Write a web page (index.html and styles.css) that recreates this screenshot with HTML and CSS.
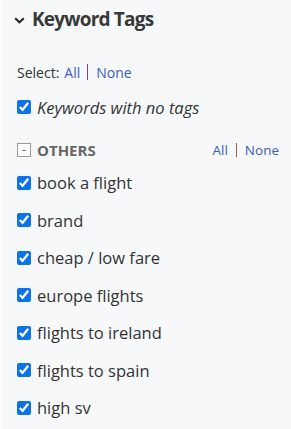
FILE: index.html
```html
<!DOCTYPE html>
<html>
<head>
<meta charset="utf-8">
<link rel="stylesheet" href="styles.css">
</head>
<body>
<div class="panel">
  <div class="header">
    <svg class="chev" width="11" height="7" viewBox="0 0 11 7"><path d="M1.2 1.2 L5.5 5.3 L9.8 1.2" fill="none" stroke="#222" stroke-width="2"/></svg>
    <span class="title">Keyword Tags</span>
  </div>
  <div class="select"><span class="lbl">Select:</span><a class="lnk">All</a><span class="sep"></span><a class="lnk">None</a></div>
  <label class="nokw"><input type="checkbox" checked><span>Keywords with no tags</span></label>
  <div class="group">
    <div class="ghead">
      <span class="minus">-</span>
      <span class="gname">OTHERS</span>
      <span class="gsel"><a class="lnk">All</a><span class="sep red"></span><a class="lnk">None</a></span>
    </div>
    <ul class="items">
      <li><label><input type="checkbox" checked><span>book a flight</span></label></li>
      <li><label><input type="checkbox" checked><span>brand</span></label></li>
      <li><label><input type="checkbox" checked><span>cheap / low fare</span></label></li>
      <li><label><input type="checkbox" checked><span>europe flights</span></label></li>
      <li><label><input type="checkbox" checked><span>flights to ireland</span></label></li>
      <li><label><input type="checkbox" checked><span>flights to spain</span></label></li>
      <li><label><input type="checkbox" checked><span>high sv</span></label></li>
    </ul>
  </div>
</div>
</body>
</html>
```
FILE: styles.css
```css
html, body { margin: 0; padding: 0; }
body {
  background: #f7f8fa;
  font-family: "Open Sans", sans-serif;
  color: #333;
  width: 291px;
  height: 429px;
  overflow: hidden;
  border-left: 1px solid #fff;
  box-sizing: border-box;
}
.panel { padding: 0 0 0 16px; }
.header {
  display: flex;
  align-items: center;
  height: 38px;
}
.chev { margin-left: -3px; margin-right: 7px; margin-top: 2px; }
.title { font-size: 19px; font-weight: 700; color: #383838; letter-spacing: -0.8px; }
.select {
  margin-top: 25px;
  font-size: 14px;
  color: #333;
  height: 18px;
  display: flex;
  align-items: center;
}
.lbl { margin-right: 5px; }
.lnk { color: #3b5bc0; }
.sep {
  display: inline-block;
  width: 1px;
  height: 16px;
  background: #8a3d9c;
  margin: 0 8px 0 7px;
}
.sep.red { background: #a8574a; height: 14px; margin: 0 8px 0 8px; }
.nokw {
  display: flex;
  align-items: center;
  margin-top: 15px;
  font-size: 16.5px;
  font-style: italic;
  height: 22px;
}
input[type=checkbox] {
  width: 14px;
  height: 14px;
  margin: 0 6px 0 0;
  accent-color: #0b72e8;
}
.group { margin-top: 20px; }
.ghead {
  display: flex;
  align-items: center;
  height: 24px;
  padding-right: 12px;
}
.minus {
  width: 12px;
  height: 12px;
  border: 1px solid #999;
  font-size: 11px;
  line-height: 10px;
  text-align: center;
  color: #333;
  margin: 0 6px 0 0;
  box-sizing: content-box;
  background: #fff;
}
.gname { font-size: 15px; font-weight: 700; color: #666; }
.gsel {
  margin-left: auto;
  font-size: 13.5px;
  display: flex;
  align-items: center;
}
.items { list-style: none; margin: 0; padding: 0; margin-top: 2px; }
.items li { height: 37.5px; display: flex; align-items: center; }
.items label {
  display: flex;
  align-items: center;
  height: 22px;
  font-size: 16.5px;
  color: #333;
}
```
